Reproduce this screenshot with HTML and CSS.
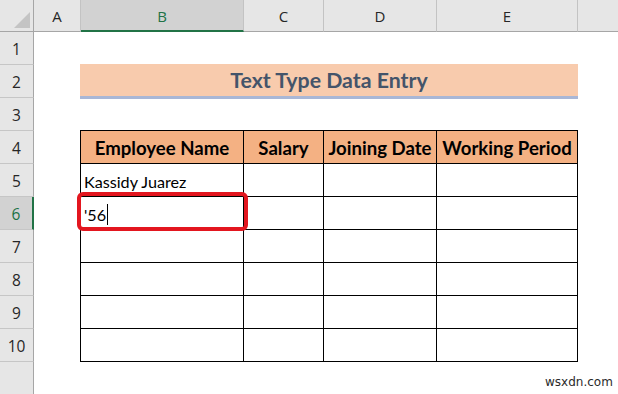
FILE: index.html
```html
<!DOCTYPE html>
<html>
<head>
<meta charset="utf-8">
<link rel="stylesheet" href="styles.css">
</head>
<body>
<div class="sheet">
  <div class="colhead corner"><svg class="tri" width="18" height="18" viewBox="0 0 18 18"><polygon points="17,1 17,17 1,17" fill="#c4c4c4"/></svg></div>
  <div class="colhead">A</div>
  <div class="colhead sel">B</div>
  <div class="colhead">C</div>
  <div class="colhead">D</div>
  <div class="colhead">E</div>
  <div class="colhead last"></div>

  <div class="rowhead r1">1</div>
  <div class="rowhead r2">2</div>
  <div class="rowhead r3">3</div>
  <div class="rowhead r4">4</div>
  <div class="rowhead r5">5</div>
  <div class="rowhead r6 sel">6</div>
  <div class="rowhead r7">7</div>
  <div class="rowhead r8">8</div>
  <div class="rowhead r9">9</div>
  <div class="rowhead r10">10</div>
  <div class="rowhead r11"></div>

  <div class="title">Text Type Data Entry</div>

  <div class="table">
    <div class="cell th">Employee Name</div>
    <div class="cell th">Salary</div>
    <div class="cell th">Joining Date</div>
    <div class="cell th">Working Period</div>

    <div class="cell td">Kassidy Juarez</div>
    <div class="cell td"></div>
    <div class="cell td"></div>
    <div class="cell td"></div>

    <div class="cell td editing">'56<span class="caret"></span></div>
    <div class="cell td"></div>
    <div class="cell td"></div>
    <div class="cell td"></div>

    <div class="cell td"></div><div class="cell td"></div><div class="cell td"></div><div class="cell td"></div>
    <div class="cell td"></div><div class="cell td"></div><div class="cell td"></div><div class="cell td"></div>
    <div class="cell td"></div><div class="cell td"></div><div class="cell td"></div><div class="cell td"></div>
    <div class="cell td"></div><div class="cell td"></div><div class="cell td"></div><div class="cell td"></div>

    <div class="redbox"></div>
  </div>

  <div class="watermark">wsxdn.com</div>
</div>
</body>
</html>
```
FILE: styles.css
```css
html, body {
  margin: 0;
  padding: 0;
  background: #ffffff;
  overflow: hidden;
}

.sheet {
  position: relative;
  width: 618px;
  height: 394px;
  display: grid;
  grid-template-columns: 34px 47px 163px 80px 113px 141px 1fr;
  grid-template-rows: 32px repeat(11, 33px);
  overflow: hidden;
  font-family: "Open Sans", "Noto Sans", sans-serif;
}

.colhead {
  box-sizing: border-box;
  background: #e6e6e6;
  border-bottom: 1px solid #a6a6a6;
  border-right: 1px solid #c3c3c3;
  display: flex;
  align-items: center;
  justify-content: center;
  font-size: 15px;
  color: #262626;
  padding-top: 1px;
}

.colhead.corner {
  border-right: 1px solid #a6a6a6;
  position: relative;
}

.tri {
  position: absolute;
  left: 13px;
  top: 11px;
}

.colhead.sel {
  background: #d2d2d2;
  color: #217346;
  border-bottom: 2px solid #217346;
}

.colhead.last {
  border-right: none;
}

.rowhead {
  grid-column: 1;
  box-sizing: border-box;
  background: #e6e6e6;
  border-right: 1px solid #a6a6a6;
  border-bottom: 1px solid #c6c6c6;
  display: flex;
  align-items: center;
  justify-content: center;
  font-size: 15.5px;
  color: #262626;
  padding-top: 2px;
}

.rowhead.sel {
  background: #d2d2d2;
  color: #217346;
  border-right: 2px solid #217346;
}

.r1 { grid-row: 2; }
.r2 { grid-row: 3; }
.r3 { grid-row: 4; }
.r4 { grid-row: 5; }
.r5 { grid-row: 6; }
.r6 { grid-row: 7; }
.r7 { grid-row: 8; }
.r8 { grid-row: 9; }
.r9 { grid-row: 10; }
.r10 { grid-row: 11; }
.r11 { grid-row: 12; border-bottom: none; }

.title {
  grid-column: 3 / span 4;
  grid-row: 3;
  margin-left: -1px;
  margin-top: -1px;
  width: 498px;
  height: 32px;
  box-sizing: content-box;
  background: #f8cbad;
  border-bottom: 3px solid #a9b7d6;
  display: flex;
  align-items: center;
  justify-content: center;
  font-family: "Lato", "Open Sans", sans-serif;
  font-weight: 700;
  font-size: 21.3px;
  color: #44546a;
  align-self: start;
}

.table {
  grid-column: 3 / span 5;
  grid-row: 5 / span 7;
  margin-left: -1px;
  margin-top: -1px;
  position: relative;
  align-self: start;
  justify-self: start;
  display: grid;
  grid-template-columns: 163px 80px 113px 141px;
  grid-auto-rows: 33px;
  border-left: 1px solid #000;
  border-top: 1px solid #000;
  font-family: "Lato", "Open Sans", sans-serif;
}

.cell {
  box-sizing: border-box;
  border-right: 1px solid #000;
  border-bottom: 1px solid #000;
  display: flex;
  align-items: center;
  color: #000;
}

.th {
  background: #f4b183;
  justify-content: center;
  font-weight: 700;
  font-size: 18.6px;
  padding-top: 1px;
  white-space: nowrap;
}

.td {
  font-size: 16.2px;
  padding-left: 3px;
  padding-top: 2px;
}

.caret {
  display: inline-block;
  width: 1px;
  height: 21px;
  background: #000;
  margin-left: 1px;
}

.redbox {
  position: absolute;
  left: -4px;
  top: 61px;
  width: 163px;
  height: 31px;
  border: 4px solid #e3161f;
  border-radius: 6px;
}

.watermark {
  position: absolute;
  left: 545px;
  top: 375px;
  font-family: "DejaVu Sans", sans-serif;
  font-size: 12px;
  color: #2a2a2a;
}
```
